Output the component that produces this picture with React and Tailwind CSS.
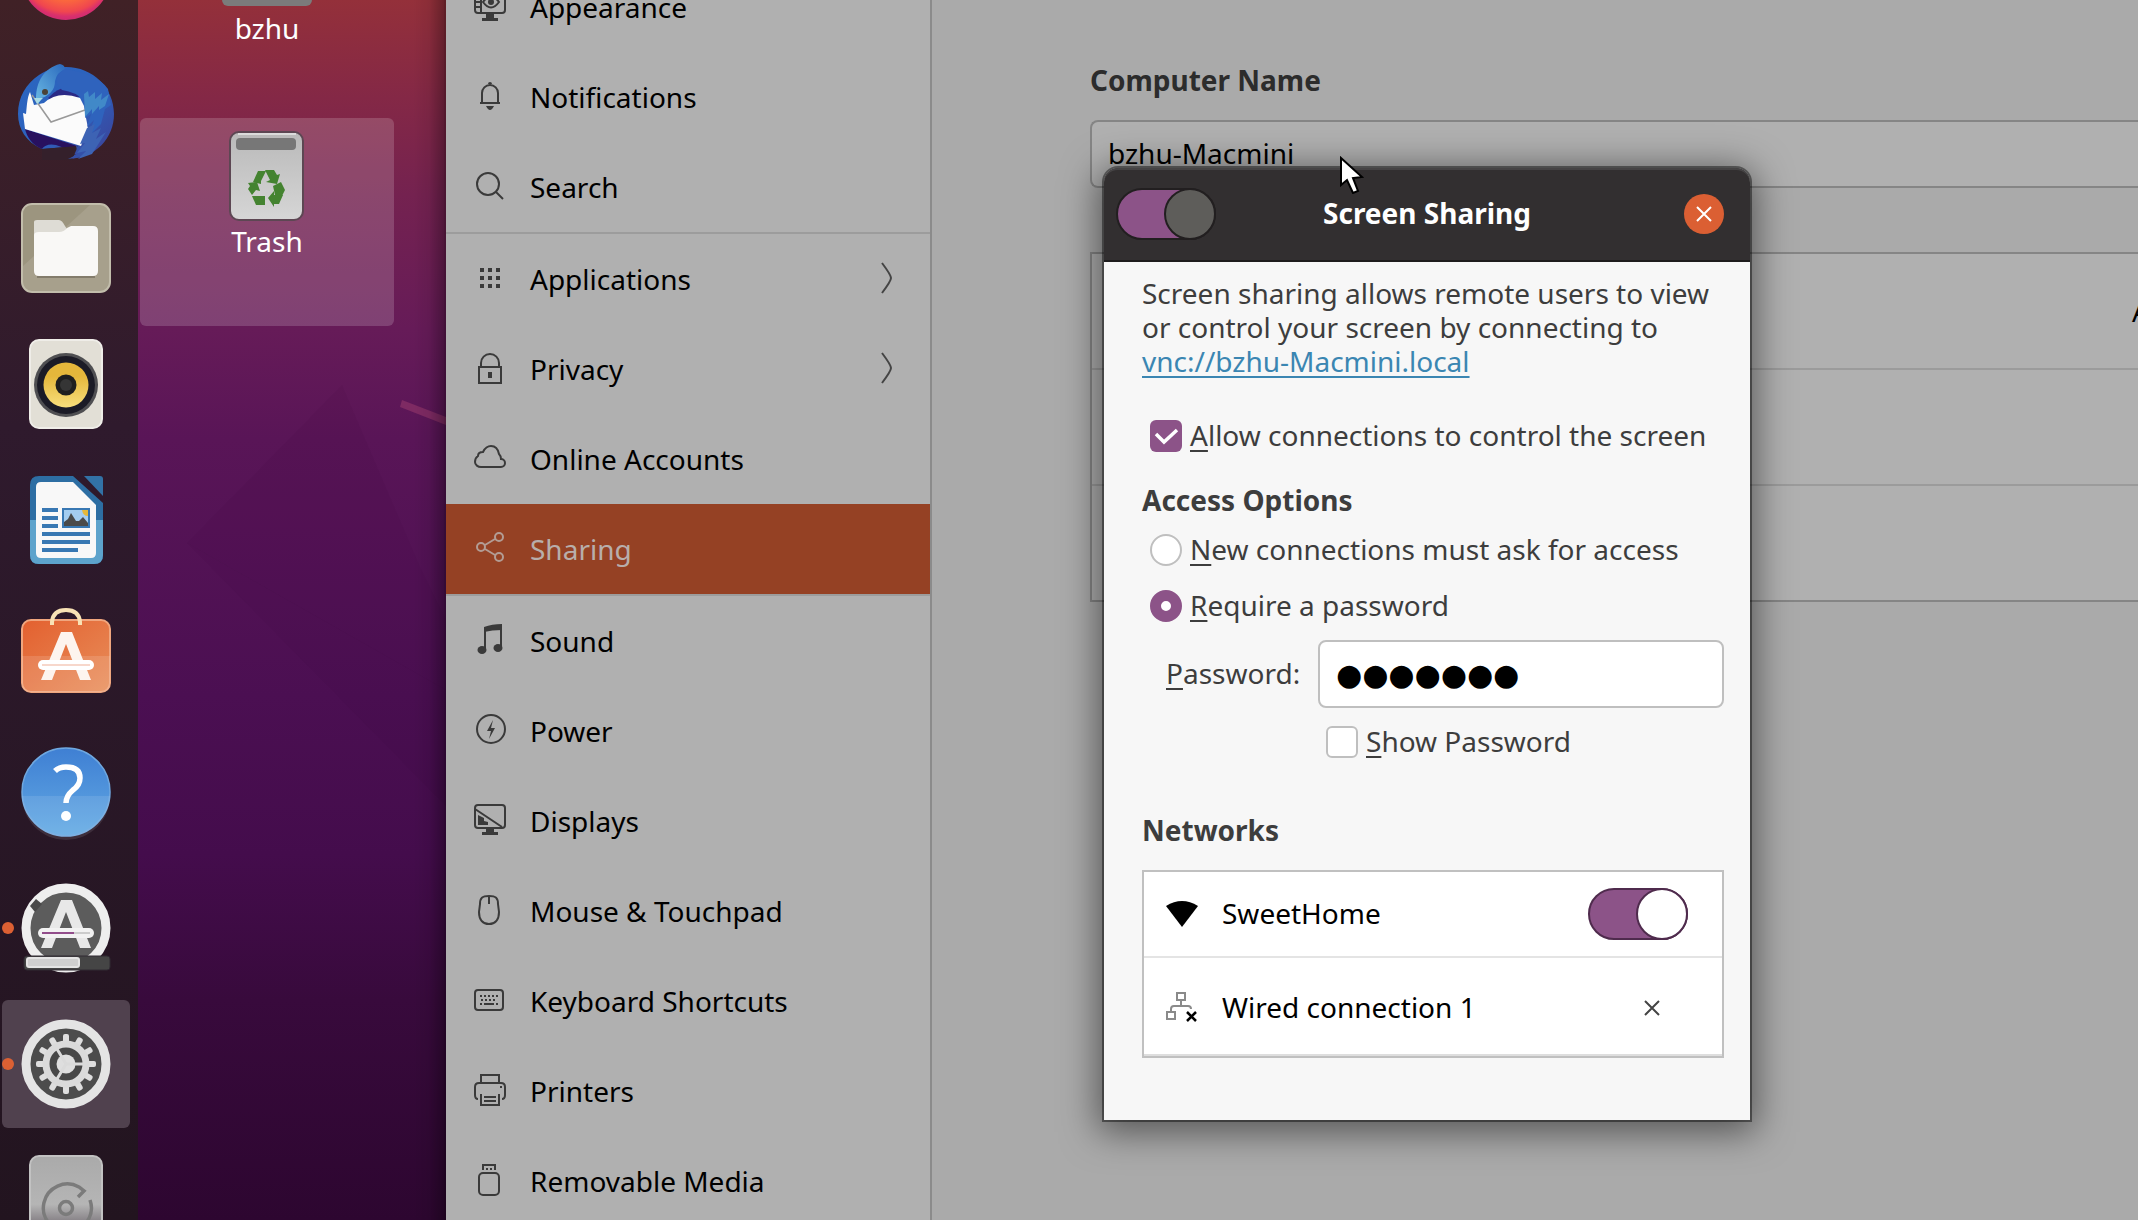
const SW = { fill: 'none', stroke: '#3a3a3a', strokeWidth: 2 };

function Icon({ children, className = '' }) {
  return (
    <svg viewBox="0 0 32 32" aria-hidden="true" className={`size-8 shrink-0 ${className}`}>
      {children}
    </svg>
  );
}

const icons = {
  appearance: (
    <Icon>
      <g {...SW}>
        <rect x="1" y="1" width="30" height="22" rx="3" />
        <path d="M7 1v22M1 7h6M1 12h6M1 17h6" />
        <path d="M9 12q8-11 16 0q-8 11-16 0z" />
      </g>
      <circle cx="17" cy="12" r="3" fill="#3a3a3a" />
      <path d="M12 24h8v4h4v3H8v-3h4z" fill="#3a3a3a" />
    </Icon>
  ),
  bell: (
    <Icon>
      <path {...SW} d="M6 23h20M8 23V13a8 8 0 0 1 16 0v10" />
      <path d="M14 4a2 2 0 0 1 4 0zM12 26h8q-2 4-4 4t-4-4z" fill="#3a3a3a" />
    </Icon>
  ),
  search: (
    <Icon>
      <circle {...SW} cx="14" cy="14" r="11" />
      <path {...SW} d="M22 22l7 7" />
    </Icon>
  ),
  apps: (
    <Icon>
      {[6, 14, 22].map((y) =>
        [6, 14, 22].map((x) => <rect key={`${x}-${y}`} x={x} y={y} width="4" height="4" fill="#3a3a3a" />),
      )}
    </Icon>
  ),
  lock: (
    <Icon>
      <rect {...SW} x="5" y="15" width="22" height="16" />
      <path {...SW} d="M7 15v-4a9 9 0 0 1 18 0v4" />
      <rect x="14" y="20" width="4" height="6" fill="#3a3a3a" />
    </Icon>
  ),
  cloud: (
    <Icon>
      <path {...SW} d="M7 25h20a4 4 0 0 0 0-8c0-2-1-4-2-5-1-5-4-8-8-8-4 0-6 2-8 6-4 0-5 2-5 4-3 2-3 4-3 6 0 3 3 5 6 5z" />
    </Icon>
  ),
  share: (
    <Icon>
      <g fill="none" stroke="#b39c94" strokeWidth="2">
        <circle cx="7" cy="15" r="4" />
        <circle cx="25" cy="5" r="4" />
        <circle cx="25" cy="25" r="4" />
        <path d="M11 13l10-6M11 17l10 6" />
      </g>
    </Icon>
  ),
  music: (
    <Icon>
      <path d="M10 3q8-3 18-3v6q-10 0-18 2z" fill="#3a3a3a" />
      <path {...SW} d="M11 3v23M27 2v22" />
      <ellipse cx="8" cy="26" rx="4.500" ry="4" fill="#3a3a3a" />
      <ellipse cx="24" cy="24" rx="4.500" ry="4" fill="#3a3a3a" />
    </Icon>
  ),
  power: (
    <Icon>
      <circle {...SW} cx="17" cy="15" r="14" />
      <path d="M19 6l-6 11h4l-2 8 6-11h-4z" fill="#3a3a3a" />
    </Icon>
  ),
  displays: (
    <Icon>
      <rect {...SW} x="1" y="1" width="30" height="23" rx="3" />
      <path {...SW} d="M1 5l27 18" />
      <path d="M4 11l6 3v3l4 1v3H4z" fill="#3a3a3a" />
      <path d="M12 24h8v4h4v3H8v-3h4z" fill="#3a3a3a" />
    </Icon>
  ),
  mouse: (
    <Icon>
      <path {...SW} d="M15 2c7 0 9 2 9 8l1 8c0 8-4 12-10 12S5 26 5 18l1-8c0-6 2-8 9-8z" />
      <path {...SW} d="M15 2v8" />
    </Icon>
  ),
  keyboard: (
    <Icon>
      <rect {...SW} x="1" y="6" width="28" height="20" rx="3" />
      <path {...SW} d="M6 12h18M7 16h16" strokeDasharray="2 2" />
      <path {...SW} d="M6 20h2M10 20h10M22 20h2" />
    </Icon>
  ),
  printer: (
    <Icon>
      <g {...SW}>
        <path d="M7 9V1h18v8" />
        <path d="M4 25q-3 0-3-4v-8q0-4 4-4h22q4 0 4 4v8q0 4-3 4" />
        <path d="M7 20v11h18V20M10 23h12M10 27h12" />
      </g>
      <rect x="26" y="12" width="2" height="2" fill="#3a3a3a" />
    </Icon>
  ),
  usb: (
    <Icon>
      <rect {...SW} x="5" y="9" width="20" height="22" rx="4" />
      <path {...SW} d="M9 6V1h12v5" />
      <path {...SW} d="M12 5h2M16 5h2" />
    </Icon>
  ),
};

const sections = [
  [
    { label: 'Appearance', icon: 'appearance' },
    { label: 'Notifications', icon: 'bell' },
    { label: 'Search', icon: 'search' },
  ],
  [
    { label: 'Applications', icon: 'apps', more: true },
    { label: 'Privacy', icon: 'lock', more: true },
    { label: 'Online Accounts', icon: 'cloud' },
    { label: 'Sharing', icon: 'share', active: true },
  ],
  [
    { label: 'Sound', icon: 'music' },
    { label: 'Power', icon: 'power' },
    { label: 'Displays', icon: 'displays' },
    { label: 'Mouse & Touchpad', icon: 'mouse' },
    { label: 'Keyboard Shortcuts', icon: 'keyboard' },
    { label: 'Printers', icon: 'printer' },
    { label: 'Removable Media', icon: 'usb' },
  ],
];

function Sidebar() {
  return (
    <nav className="w-[486px] shrink-0 overflow-hidden border-r-2 border-[#8b8b8b] bg-[#b0b0b0]">
      <div className="-mt-[38px]">
        {sections.map((rows, i) => (
          <ul key={i} className={i < 2 ? 'border-b-2 border-[#9c9c9c]' : ''}>
            {rows.map((row) => (
              <li key={row.label}>
                <button
                  className={`flex h-[90px] w-full items-center gap-6 px-7 pb-0.5 text-left ${
                    row.active ? 'bg-[#954124] text-[#b8aeab]' : 'text-black'
                  }`}
                >
                  {icons[row.icon]}
                  <span className="flex-1 pt-0.5">{row.label}</span>
                  {row.more && (
                    <Icon>
                      <path d="M12 1q9 12 9 15t-9 15" fill="none" stroke="#444" strokeWidth="2" />
                    </Icon>
                  )}
                </button>
              </li>
            ))}
          </ul>
        ))}
      </div>
    </nav>
  );
}

function DockIcon({ children }) {
  return (
    <svg viewBox="0 0 96 96" aria-hidden="true" className="size-24">
      {children}
    </svg>
  );
}

const gearTeeth = Array.from({ length: 12 }, (_, i) => i * 30);

const dockApps = [
  {
    name: 'Firefox',
    art: (
      <>
        <defs>
          <radialGradient id="ff" cx="0.5" cy="0.4" r="0.62">
            <stop offset="0" stopColor="#ffb13d" />
            <stop offset="0.6" stopColor="#fb6a3c" />
            <stop offset="0.82" stopColor="#f0464f" />
            <stop offset="0.9" stopColor="#d9306c" />
            <stop offset="1" stopColor="#c92a74" />
          </radialGradient>
        </defs>
        <circle cx="48" cy="47" r="45" fill="url(#ff)" />
      </>
    ),
  },
  {
    name: 'Thunderbird Mail',
    art: (
      <>
        <defs>
          <linearGradient id="tb" x1="0" y1="0" x2="1" y2="1">
            <stop offset="0" stopColor="#2a66c0" />
            <stop offset="0.5" stopColor="#2d62bd" />
            <stop offset="1" stopColor="#3d3f96" />
          </linearGradient>
          <linearGradient id="tbh" x1="0" y1="1" x2="1" y2="0">
            <stop offset="0" stopColor="#6bbbe4" />
            <stop offset="1" stopColor="#2a68bd" />
          </linearGradient>
        </defs>
        <path
          d="M48 3C75 3 96 24 96 50c0 24-18 44-46 45l8-5-10 2 12-10L24 85C8 78 0 65 0 50 0 33 8 20 21 11 30 5 38 3 48 3z"
          fill="url(#tb)"
        />
        <path d="M7 65l52 17-7 4-14-5q-10-2-14 4C14 81 9 73 7 65z" fill="#28115f" />
        <path d="M24 85l36-3-6 14H24z" fill="#34202b" />
        <path d="M50 95l10-5-2-8 10 2-4 9z" fill="#3450a8" />
        <path d="M30 34q18-20 36-2l-30 6z" fill="#2b2a86" />
        <path
          d="M12 28C9 34 9 42 8 50l-3-1 2 16 56 17 3-8 4-10-2-10-2-12-4-8q-22-8-36 5l-10 2z"
          fill="#fbfbfb"
        />
        <path d="M14 31l19 27 34-12" fill="none" stroke="#999" strokeWidth="1.500" />
        <path d="M18 34C18 18 26 4 42 0q5 1 5 5-8 3-10 12 0 12-13 17l-4 6z" fill="url(#tbh)" />
        <path d="M47 5Q32 14 44 26 58 28 65 36q4 6 2 18l6-4-4 13 7-7-7 18 14-14 4-15 6-4-3-16Q80 10 47 5z" fill="#2f63bd" />
        <path d="M66 30l4-3 1 6 6-5v7l7-6-1 7 8-6-4 12-6 4v-4l-7 8v-5l-7 8z" fill="#4189c8" />
        <path d="M69 64l8-4-3 9 9-5-5 11 10-7-14 22-14 5 8-8-9 2 8-10-5 1z" fill="#3d63b4" />
        <path d="M16 34l9 0-6 6z" fill="#a8dbe6" />
        <circle cx="27" cy="28" r="3" fill="#4a4338" />
      </>
    ),
  },
  {
    name: 'Files',
    art: (
      <>
        <rect x="4" y="4" width="88" height="88" rx="10" fill="#a7a08c" stroke="#c2bdab" strokeWidth="2" />
        <path d="M5 66L72 5H15Q5 5 5 15z" fill="#9c957f" />
        <path d="M16 28v-6q0-2 3-2h22q3 0 6 6l4 6v6H16z" fill="#dedcd5" />
        <path d="M16 35q0-3 5-3h20q5 0 8-4l4-2h22q5 0 5 5v40q0 5-5 5H21q-5 0-5-5z" fill="#f9f8f6" />
        <path d="M19 77h58" stroke="#777060" strokeWidth="1.500" />
      </>
    ),
  },
  {
    name: 'Rhythmbox',
    art: (
      <>
        <defs>
          <linearGradient id="rb" x1="0" y1="0" x2="0" y2="1">
            <stop offset="0.3" stopColor="#e5b73b" />
            <stop offset="1" stopColor="#f8df7c" />
          </linearGradient>
        </defs>
        <rect x="12" y="4" width="72" height="88" rx="9" fill="#e2dfd6" stroke="#efede8" strokeWidth="2" />
        <circle cx="48" cy="49" r="32" fill="#4f4f52" />
        <circle cx="48" cy="49" r="29" fill="#1b1b26" />
        <circle cx="48" cy="49" r="22.500" fill="url(#rb)" />
        <circle cx="48" cy="49" r="10.500" fill="#1f1f1f" />
        <circle cx="48" cy="49" r="6" fill="#353535" />
      </>
    ),
  },
  {
    name: 'LibreOffice Writer',
    art: (
      <>
        <path d="M12 13q0-9 9-9h34l30 27v52q0 9-9 9H21q-9 0-9-9z" fill="#2d6ea3" />
        <path d="M12 48h73v35q0 9-9 9H21q-9 0-9-9z" fill="#5da3cc" />
        <path d="M66 4h16q3 0 3 3v17z" fill="#3272a6" />
        <path d="M18 15q0-5 5-5h32l23 23v48q0 5-5 5H23q-5 0-5-5z" fill="#f8f8f8" />
        <g fill="#3878b3">
          <rect x="24" y="36" width="16" height="4" />
          <rect x="24" y="44" width="16" height="4" />
          <rect x="24" y="52" width="16" height="4" />
          <rect x="24" y="60" width="48" height="4" />
          <rect x="24" y="68" width="48" height="4" />
          <rect x="24" y="76" width="36" height="4" />
          <rect x="44" y="36" width="28" height="20" />
        </g>
        <rect x="46" y="38" width="24" height="16" fill="#a4cdf0" />
        <path d="M64 38h6v6q-5 0-6-6z" fill="#e6b83a" />
        <path d="M46 54v-4l4-3 3-6 5 8h3l4-4 5 6v3z" fill="#4a4a4a" />
      </>
    ),
  },
  {
    name: 'Ubuntu Software',
    art: (
      <>
        <defs>
          <linearGradient id="us" x1="0" y1="0" x2="1" y2="1">
            <stop offset="0" stopColor="#e3602f" />
            <stop offset="1" stopColor="#e88e5a" />
          </linearGradient>
        </defs>
        <rect x="4" y="12" width="88" height="72" rx="9" fill="url(#us)" stroke="#f0a67e" strokeWidth="2" />
        <path d="M4 48h88v27q0 9-9 9H13q-9 0-9-9z" fill="#fff" opacity="0.13" />
        <path d="M34 17v-3q1-12 14-12t14 12v3" fill="none" stroke="#f8e2b5" strokeWidth="4" />
        <path d="M43 24h11l19 48H62L48 36 34 72H23z" fill="#fdf4ee" />
        <rect x="20" y="52" width="56" height="10" rx="5" fill="#fff" />
        <path d="M24 57h48" stroke="#f7d7cb" strokeWidth="2" />
      </>
    ),
  },
  {
    name: 'Help',
    art: (
      <>
        <defs>
          <linearGradient id="hp" x1="0" y1="0" x2="0" y2="1">
            <stop offset="0" stopColor="#3f7fd3" />
            <stop offset="1" stopColor="#62aae4" />
          </linearGradient>
        </defs>
        <circle cx="48" cy="48" r="44" fill="url(#hp)" stroke="#6fa8e0" strokeWidth="1.500" />
        <path d="M4 52h88a44 44 0 0 1-88 0z" fill="#fff" opacity="0.1" />
        <path d="M37 27q4-4 11-4 14 0 14 11 0 7-7 12-7 6-7 13" fill="none" stroke="#fff" strokeWidth="5.500" />
        <circle cx="48" cy="72" r="5" fill="#fff" />
      </>
    ),
  },
  {
    name: 'Software Updater',
    running: true,
    art: (
      <>
        <circle cx="48" cy="48" r="40" fill="#5c5c5c" stroke="#eee" strokeWidth="9" />
        <path d="M12 26l6-7 6 5-7 8z" fill="#4a4a4a" />
        <path d="M43 20h11l19 48H62L48 32 34 68H23z" fill="#e8e8e8" />
        <rect x="20" y="48" width="56" height="10" rx="5" fill="#f2f2f2" />
        <path d="M24 53h32" stroke="#924d8b" strokeWidth="2" />
        <path d="M56 53h16" stroke="#ccc" strokeWidth="2" />
        <rect x="6" y="76" width="86" height="14" rx="3" fill="#454545" stroke="#302a33" strokeWidth="1" />
        <rect x="9" y="78" width="52" height="9" rx="2" fill="#cfcfcf" stroke="#e4e4e4" strokeWidth="2" />
      </>
    ),
  },
  {
    name: 'Settings',
    running: true,
    active: true,
    art: (
      <>
        <circle cx="48" cy="48" r="40" fill="#4c4c4c" stroke="#e4e4e4" strokeWidth="9" />
        {gearTeeth.map((deg) => (
          <rect key={deg} x="45" y="18" width="6" height="12" rx="2" fill="#dedede" transform={`rotate(${deg} 48 48)`} />
        ))}
        <circle cx="48" cy="48" r="19.500" fill="none" stroke="#dadada" strokeWidth="8" />
        <circle cx="48" cy="48" r="13" fill="none" stroke="#474747" strokeWidth="7" />
        <circle cx="48" cy="48" r="9.500" fill="#dedede" />
        <path d="M48 48h18M48 48l-9-15M48 48l-9 15" stroke="#dadada" strokeWidth="3" />
      </>
    ),
  },
  {
    name: 'Disks',
    art: (
      <>
        <defs>
          <linearGradient id="dk" x1="0" y1="0" x2="0" y2="1">
            <stop offset="0" stopColor="#aaaaaa" />
            <stop offset="0.55" stopColor="#b5b5b5" />
            <stop offset="0.75" stopColor="#858085" />
            <stop offset="1" stopColor="#777" />
          </linearGradient>
        </defs>
        <rect x="12" y="4" width="72" height="88" rx="9" fill="url(#dk)" stroke="#c2c2c2" strokeWidth="2" />
        <g fill="none" stroke="#7b7b7b" strokeWidth="3.500">
          <path d="M60 45l6-6-5-4A24 24 0 1 0 72 48" />
          <circle cx="48" cy="56" r="6.500" />
        </g>
      </>
    ),
  },
];

function Dock() {
  return (
    <aside className="w-[138px] shrink-0 overflow-hidden bg-linear-to-b from-[#402126] from-0% via-[#2f1a2d] via-35% to-[#22141f] to-100%">
      <div className="-mt-[88px] flex flex-col gap-2 px-0.5">
        {dockApps.map((app) => (
          <button
            key={app.name}
            aria-label={app.name}
            className={`relative flex size-32 shrink-0 items-center justify-center rounded-md ${app.active ? 'bg-[#50414e]' : ''}`}
          >
            {app.running && <span className="absolute top-[58px] left-0 size-3 rounded-full bg-[#dc6033]" />}
            <DockIcon>{app.art}</DockIcon>
          </button>
        ))}
      </div>
    </aside>
  );
}

function Desktop() {
  return (
    <section className="relative flex w-[308px] shrink-0 flex-col overflow-hidden bg-[linear-gradient(to_bottom,#94303a_0%,#842846_8%,#742250_16%,#661b58_27%,#591557_36%,#4b0f52_57%,#440c4c_70%,#380a3c_82%,#2d0630_100%)] px-0.5 text-white [text-shadow:1px_2px_0_#000]">
      <svg viewBox="0 0 308 1220" preserveAspectRatio="none" aria-hidden="true" className="absolute inset-0 h-full w-full">
        <path d="M204 385L282 567 308 620V690L49 543z" fill="#2b0636" opacity="0.06" />
        <path d="M49 543L308 690V806z" fill="#2b0636" opacity="0.06" />
        <path d="M264 400l44 17v8l-46-18z" fill="#7e2a63" />
      </svg>
      <button className="relative flex h-[110px] w-[254px] flex-col items-center">
        <span className="h-1.5 w-[90px] rounded-b-md bg-[#7b7b7b]" />
        <span className="pt-1.5 leading-8">bzhu</span>
      </button>
      <button className="relative mt-2 flex h-[208px] w-[254px] flex-col items-center rounded-md bg-white/17 pt-3">
        <svg viewBox="0 0 76 92" aria-hidden="true" className="h-[92px] w-[76px]">
          <defs>
            <linearGradient id="tr" x1="0" y1="0" x2="0" y2="1">
              <stop offset="0" stopColor="#b9b9b9" />
              <stop offset="1" stopColor="#d6d6d6" />
            </linearGradient>
          </defs>
          <rect x="1" y="2" width="73" height="88" rx="9" fill="url(#tr)" stroke="#5d4753" strokeWidth="2" />
          <path d="M9 4h58" stroke="#dcdcdc" strokeWidth="2" />
          <rect x="7" y="8" width="60" height="12" rx="4" fill="#777" />
          <g fill="#448330">
            <path d="M29 41h8l-5 10v3l-8-2z" />
            <path d="M36 40h9l3 5 3-1-3 10-11-2 4-2z" />
            <path d="M44 56l8-4 4 8-3 6-7-1z" />
            <path d="M39 68l6-7v4h9l-4 9h-5v3z" />
            <path d="M19 53l9-1 3 9-4-1-4 5-4-6 2-3z" />
            <path d="M23 66h13v9H27z" />
          </g>
        </svg>
        <span className="pt-[3px] leading-8">Trash</span>
      </button>
      <div className="absolute inset-y-0 right-0 w-8 border-r-2 border-black/35 bg-linear-to-r from-black/0 via-black/6 to-black/30" />
    </section>
  );
}

function Main() {
  return (
    <main className="min-w-0 flex-1 overflow-hidden bg-[#aaaaaa] pt-[60px] pl-[158px]">
      <label htmlFor="computer-name" className="block leading-10 font-bold text-[#2c2c2c]">
        Computer Name
      </label>
      <input
        id="computer-name"
        defaultValue="bzhu-Macmini"
        className="mt-5 block h-[68px] w-full rounded-l-lg border-2 border-r-0 border-[#858585] bg-[#b0b0b0] px-4 pb-0.5 text-black"
      />
      <ul className="mt-16 border-2 border-r-0 border-[#858585] bg-[#b0b0b0] text-black">
        <li className="flex h-[116px] items-center justify-end border-b-2 border-[#9b9b9b]">
          <span className="-mr-3">A</span>
        </li>
        <li className="h-[116px] border-b-2 border-[#9b9b9b]" />
        <li className="h-[114px]" />
      </ul>
    </main>
  );
}

function Key({ children }) {
  return <span className="underline decoration-2 underline-offset-4">{children}</span>;
}

function Dialog() {
  return (
    <div
      role="dialog"
      aria-labelledby="dialog-title"
      className="absolute top-[168px] left-[1104px] w-[646px] rounded-t-[14px] bg-[#f7f7f7] text-[#3d3d3d] shadow-[0_0_0_2px_rgba(0,0,0,0.42),0_6px_36px_6px_rgba(0,0,0,0.5)]"
    >
      <header className="flex h-[94px] items-center justify-between rounded-t-[14px] border-b-2 border-b-[#1e1c1d] bg-[#322f30] pr-[26px] pl-3 inset-shadow-[0_2px_0_#454344]">
        <button
          role="switch"
          aria-checked="true"
          aria-label="Screen Sharing"
          className="flex h-[52px] w-[100px] justify-end rounded-full border-2 border-[#221f20] bg-[#8c5388]"
        >
          <span className="-my-0.5 -mr-0.5 size-[52px] rounded-full border-2 border-[#221f20] bg-[#5e5d5a]" />
        </button>
        <h1 id="dialog-title" className="absolute inset-x-28 pb-0.5 text-center font-bold text-white">
          Screen Sharing
        </h1>
        <button aria-label="Close" className="relative flex size-10 items-center justify-center rounded-full bg-[#db5f33]">
          <svg viewBox="0 0 16 16" className="size-4">
            <path d="M1 1l14 14M15 1L1 15" stroke="#fff" strokeWidth="2" />
          </svg>
        </button>
      </header>

      <div className="flex flex-col pt-3.5 pr-[26px] pb-[62px] pl-[38px]">
        <p className="leading-[34px]">
          Screen sharing allows remote users to view
          <br />
          or control your screen by connecting to
          <br />
          <a href="vnc://bzhu-Macmini.local" className="text-[#3b86b2] underline decoration-2 underline-offset-4">
            vnc://bzhu-Macmini.local
          </a>
        </p>

        <label className="mt-[38px] ml-2 flex h-10 items-center gap-2 whitespace-nowrap">
          <span className="relative flex">
            <input type="checkbox" defaultChecked className="size-8 appearance-none rounded-md bg-[#8c5388]" />
            <svg viewBox="0 0 32 32" aria-hidden="true" className="pointer-events-none absolute inset-0 size-8">
              <path d="M6 14l8 8L27 10" fill="none" stroke="#fff" strokeWidth="3.500" />
            </svg>
          </span>
          <span className="pb-0.5">
            <Key>A</Key>llow connections to control the screen
          </span>
        </label>

        <h2 className="mt-6 leading-10 font-bold">Access Options</h2>
        <label className="mt-2.5 ml-2 flex h-10 items-center gap-2">
          <input type="radio" name="access" className="size-8 appearance-none rounded-full border-2 border-[#bfbfbf] bg-white" />
          <span className="pb-0.5">
            <Key>N</Key>ew connections must ask for access
          </span>
        </label>
        <label className="mt-4 ml-2 flex h-10 items-center gap-2">
          <input
            type="radio"
            name="access"
            defaultChecked
            className="size-8 appearance-none rounded-full border-[11px] border-[#8c5388] bg-white"
          />
          <span className="pb-0.5">
            <Key>R</Key>equire a password
          </span>
        </label>

        <div className="mt-3.5 flex h-[68px] items-center gap-3.5 pl-6">
          <label htmlFor="password" className="w-[138px] shrink-0 pb-0.5 whitespace-nowrap">
            <Key>P</Key>assword:
          </label>
          <input
            id="password"
            defaultValue="●●●●●●●"
            className="h-full min-w-0 flex-1 rounded-lg border-2 border-[#bfbfbf] bg-white px-4 font-['DejaVu_Sans',sans-serif] text-[30px] text-black"
          />
        </div>
        <label className="mt-3.5 ml-46 flex h-10 items-center gap-2">
          <input type="checkbox" className="size-8 appearance-none rounded-md border-2 border-[#bfbfbf] bg-white" />
          <span className="pb-0.5">
            <Key>S</Key>how Password
          </span>
        </label>

        <h2 className="mt-12 leading-10 font-bold">Networks</h2>
        <ul className="mt-5 border-2 border-[#c0c0c0] bg-white text-black">
          <li className="flex h-[86px] items-center gap-6 border-b-2 border-[#e4e4e4] pr-[34px] pl-[22px]">
            <Icon>
              <path d="M0 8q16-10 32 0L16 29z" fill="#000" />
            </Icon>
            <span className="flex-1 pb-0.5">SweetHome</span>
            <button
              role="switch"
              aria-checked="true"
              aria-label="SweetHome"
              className="flex h-[52px] w-[100px] justify-end rounded-full border-2 border-[#4f2b4d] bg-[#8c5388]"
            >
              <span className="-my-0.5 -mr-0.5 size-[52px] rounded-full border-2 border-[#4f2b4d] bg-white" />
            </button>
          </li>
          <li className="flex h-[98px] items-center gap-6 border-b-2 border-[#dedede] pt-1 pr-[54px] pl-[22px]">
            <Icon>
              <g fill="none" stroke="#8a8a8a" strokeWidth="2">
                <rect x="11" y="1" width="8" height="7" />
                <rect x="1" y="20" width="8" height="7" />
                <path d="M15 8v6M5 20v-3q0-3 3-3h14q3 0 3 3" />
              </g>
              <path d="M21 20l9 9M30 20l-9 9" stroke="#000" strokeWidth="2.500" />
            </Icon>
            <span className="flex-1 pb-0.5">Wired connection 1</span>
            <button aria-label="Remove Wired connection 1" className="flex size-8 items-center justify-center">
              <svg viewBox="0 0 16 16" className="size-4">
                <path d="M1 1l14 14M15 1L1 15" stroke="#444" strokeWidth="2" />
              </svg>
            </button>
          </li>
        </ul>
      </div>
    </div>
  );
}

export default function App() {
  return (
    <div className="relative flex h-screen overflow-hidden font-['Noto_Sans',sans-serif] text-[28px]">
      <Dock />
      <Desktop />
      <Sidebar />
      <Main />
      <Dialog />
      <svg viewBox="0 0 24 38" aria-hidden="true" className="pointer-events-none absolute top-[156px] left-[1340px] h-[38px] w-6">
        <path d="M1 2v27l6-5 6 13 5-2-5-13 9-1z" fill="#fff" stroke="#000" strokeWidth="2" />
      </svg>
    </div>
  );
}
